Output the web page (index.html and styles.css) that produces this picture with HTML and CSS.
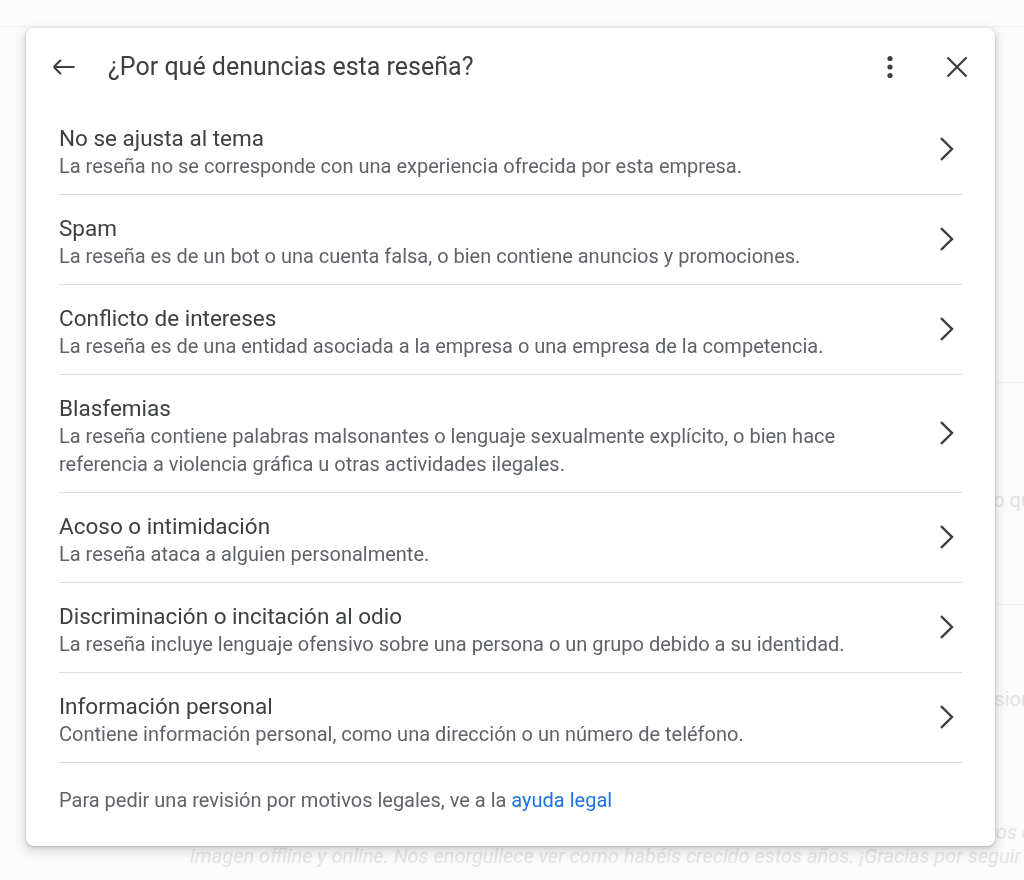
FILE: index.html
```html
<!DOCTYPE html>
<html lang="es">
<head>
<meta charset="utf-8">
<title>¿Por qué denuncias esta reseña?</title>
<link rel="stylesheet" href="styles.css">
</head>
<body>
<div class="page">
  <div class="topbar"></div>
  <div class="bg-content">
    <div class="bg-rule"></div>
    <div class="bg-line bg-line-1">Nos encanta saber que te ha gustado todo lo qu</div>
    <div class="bg-rule bg-rule-2"></div>
    <div class="bg-line bg-line-2">Gracias por confiar en nuestro equipo profesion</div>
    <div class="bg-quote">
      <div class="bg-q1">Llevamos muchos años trabajando juntos y cuidando vuestra marca, tanto en nuestros c</div>
      <div class="bg-q2">imagen offline y online. Nos enorgullece ver como habéis crecido estos años. ¡Gracias por seguir</div>
    </div>
  </div>
</div>

<div class="dialog" role="dialog" aria-label="¿Por qué denuncias esta reseña?">
  <header class="dlg-header">
    <button class="icon-btn" aria-label="Atrás">
      <svg width="24" height="24" viewBox="0 0 24 24" aria-hidden="true"><path d="M1.8 12H22.5M1.8 12L8.8 5M1.8 12L8.8 19" fill="none" stroke="#3c4043" stroke-width="2.1"/></svg>
    </button>
    <h1 class="dlg-title">¿Por qué denuncias esta reseña?</h1>
    <button class="icon-btn kebab" aria-label="Más opciones">
      <svg width="24" height="24" viewBox="0 0 24 24" aria-hidden="true"><circle cx="12" cy="3.5" r="2.6" fill="#3c4043"/><circle cx="12" cy="12" r="2.6" fill="#3c4043"/><circle cx="12" cy="20.5" r="2.6" fill="#3c4043"/></svg>
    </button>
    <button class="icon-btn close" aria-label="Cerrar">
      <svg width="24" height="24" viewBox="0 0 24 24" aria-hidden="true"><path d="M2.5 2.5L21.5 21.5M21.5 2.5L2.5 21.5" fill="none" stroke="#3c4043" stroke-width="2.3"/></svg>
    </button>
  </header>

  <ul class="reasons">
    <li class="reason">
      <div class="reason-text">
        <div class="reason-title">No se ajusta al tema</div>
        <div class="reason-desc">La reseña no se corresponde con una experiencia ofrecida por esta empresa.</div>
      </div>
      <svg class="chev" width="24" height="24" viewBox="0 0 24 24" aria-hidden="true"><path d="M6 1.2L17 12L6 22.8" fill="none" stroke="#3c4043" stroke-width="2.4"/></svg>
    </li>
    <li class="reason">
      <div class="reason-text">
        <div class="reason-title">Spam</div>
        <div class="reason-desc">La reseña es de un bot o una cuenta falsa, o bien contiene anuncios y promociones.</div>
      </div>
      <svg class="chev" width="24" height="24" viewBox="0 0 24 24" aria-hidden="true"><path d="M6 1.2L17 12L6 22.8" fill="none" stroke="#3c4043" stroke-width="2.4"/></svg>
    </li>
    <li class="reason">
      <div class="reason-text">
        <div class="reason-title">Conflicto de intereses</div>
        <div class="reason-desc">La reseña es de una entidad asociada a la empresa o una empresa de la competencia.</div>
      </div>
      <svg class="chev" width="24" height="24" viewBox="0 0 24 24" aria-hidden="true"><path d="M6 1.2L17 12L6 22.8" fill="none" stroke="#3c4043" stroke-width="2.4"/></svg>
    </li>
    <li class="reason">
      <div class="reason-text">
        <div class="reason-title">Blasfemias</div>
        <div class="reason-desc">La reseña contiene palabras malsonantes o lenguaje sexualmente explícito, o bien hace<br>referencia a violencia gráfica u otras actividades ilegales.</div>
      </div>
      <svg class="chev" width="24" height="24" viewBox="0 0 24 24" aria-hidden="true"><path d="M6 1.2L17 12L6 22.8" fill="none" stroke="#3c4043" stroke-width="2.4"/></svg>
    </li>
    <li class="reason">
      <div class="reason-text">
        <div class="reason-title">Acoso o intimidación</div>
        <div class="reason-desc">La reseña ataca a alguien personalmente.</div>
      </div>
      <svg class="chev" width="24" height="24" viewBox="0 0 24 24" aria-hidden="true"><path d="M6 1.2L17 12L6 22.8" fill="none" stroke="#3c4043" stroke-width="2.4"/></svg>
    </li>
    <li class="reason">
      <div class="reason-text">
        <div class="reason-title">Discriminación o incitación al odio</div>
        <div class="reason-desc">La reseña incluye lenguaje ofensivo sobre una persona o un grupo debido a su identidad.</div>
      </div>
      <svg class="chev" width="24" height="24" viewBox="0 0 24 24" aria-hidden="true"><path d="M6 1.2L17 12L6 22.8" fill="none" stroke="#3c4043" stroke-width="2.4"/></svg>
    </li>
    <li class="reason">
      <div class="reason-text">
        <div class="reason-title">Información personal</div>
        <div class="reason-desc">Contiene información personal, como una dirección o un número de teléfono.</div>
      </div>
      <svg class="chev" width="24" height="24" viewBox="0 0 24 24" aria-hidden="true"><path d="M6 1.2L17 12L6 22.8" fill="none" stroke="#3c4043" stroke-width="2.4"/></svg>
    </li>
  </ul>

  <p class="dlg-footer">Para pedir una revisión por motivos legales, ve a la <a href="#" class="link">ayuda legal</a></p>
</div>
</body>
</html>
```

FILE: styles.css
```css
* { box-sizing: border-box; }

html, body {
  margin: 0;
  padding: 0;
  width: 1024px;
  height: 880px;
  overflow: hidden;
  background: #fbfbfb;
  font-family: Roboto, "Noto Sans", "Liberation Sans", sans-serif;
}

.page {
  width: 1024px;
  height: 880px;
  overflow: hidden;
}

.topbar {
  height: 27px;
  background: #fcfcfc;
  border-bottom: 1px solid #f1f1f1;
}

.bg-content {
  margin-left: 190px;
  width: 842px;
  padding-top: 355px;
  color: #e2e2e2;
  font-size: 20px;
  white-space: nowrap;
}

.bg-rule {
  border-top: 1px solid #efefef;
}

.bg-line {
  text-align: right;
  line-height: 28px;
}

.bg-line-1 { margin-top: 103px; }
.bg-rule-2 { margin-top: 90px; }
.bg-line-2 { margin-top: 80px; }

.bg-quote {
  margin-top: 107px;
  font-style: italic;
  line-height: 24px;
  color: #e4e4e4;
}

.bg-q1 { text-align: right; }
.bg-q2 { text-align: left; }

.dialog {
  position: fixed;
  left: 26px;
  top: 28px;
  width: 969px;
  height: 818px;
  background: #fff;
  border-radius: 8px;
  box-shadow: 0 1px 3px rgba(60, 64, 67, 0.3), 0 4px 8px 3px rgba(60, 64, 67, 0.15);
  display: flex;
  flex-direction: column;
}

.dlg-header {
  height: 77px;
  display: flex;
  align-items: center;
  padding: 0 18px 0 18px;
}

.icon-btn {
  width: 40px;
  height: 40px;
  border: 0;
  padding: 0;
  margin: 0;
  background: transparent;
  display: flex;
  align-items: center;
  justify-content: center;
  flex: none;
}

.dlg-title {
  margin: 0 0 0 24px;
  flex: 1;
  font-size: 25px;
  font-weight: 400;
  color: #3c4043;
  line-height: 32px;
}

.kebab { margin-right: 27px; }

.reasons {
  list-style: none;
  margin: 0;
  padding: 0 33px;
}

.reason {
  display: flex;
  align-items: center;
  padding: 19px 0 14px;
  border-bottom: 1px solid #dadce0;
}

.reason-text {
  flex: 1;
}

.reason-title {
  font-size: 22.5px;
  line-height: 28px;
  color: #3c4043;
}

.reason-desc {
  font-size: 20px;
  line-height: 28px;
  color: #5f6368;
}

.chev {
  flex: none;
  margin-right: 3px;
  margin-top: -6px;
}

.dlg-footer {
  margin: 0;
  padding: 23px 33px 32px;
  font-size: 20px;
  line-height: 28px;
  color: #5f6368;
}

.link {
  color: #1a73e8;
  text-decoration: none;
}
```
